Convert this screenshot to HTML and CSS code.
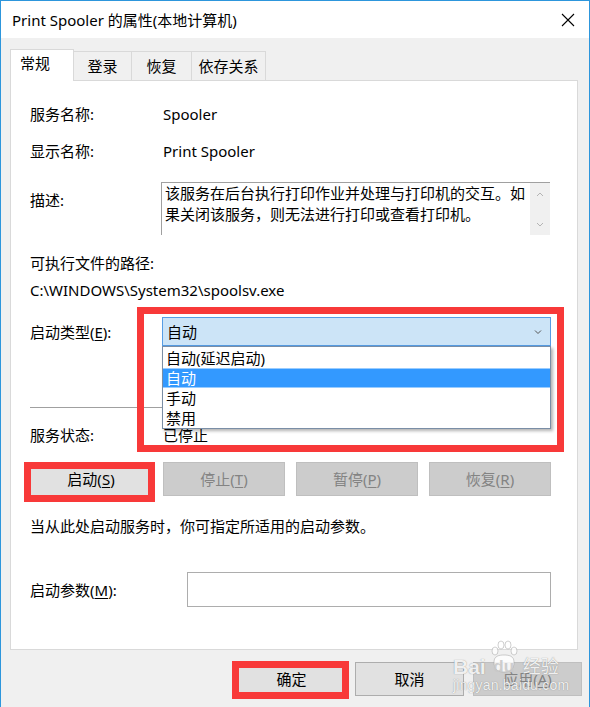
FILE: index.html
```html
<!DOCTYPE html>
<html lang="zh-CN">
<head>
  <meta charset="UTF-8">
  <title>Print Spooler 的属性</title>
  <link rel="stylesheet" href="styles.css">
</head>
<body>
  <div class="window">
    <div class="titlebar">
      <span class="title">Print Spooler 的属性(本地计算机)</span>
      <svg class="close" width="14" height="14" viewBox="0 0 14 14">
        <path d="M1 1L13 13M13 1L1 13" stroke="#000" stroke-width="1.1" fill="none"/>
      </svg>
    </div>

    <div class="client">
      <div class="tabs">
        <div class="tab active" style="width:64px">常规</div>
        <div class="tab" style="width:58px">登录</div>
        <div class="tab" style="width:60px">恢复</div>
        <div class="tab" style="width:74px">依存关系</div>
      </div>

      <div class="panel">
        <div class="row first">
          <div class="label">服务名称:</div>
          <div class="value">Spooler</div>
        </div>
        <div class="row gap17">
          <div class="label">显示名称:</div>
          <div class="value">Print Spooler</div>
        </div>
        <div class="row desc-row">
          <div class="label">描述:</div>
          <div class="desc-box">
            <div class="desc-text">该服务在后台执行打印作业并处理与打印机的交互。如<br>果关闭该服务，则无法进行打印或查看打印机。</div>
            <div class="scrollbar">
              <svg width="20" height="53" viewBox="0 0 20 53">
                <path d="M7 13L10 10L13 13" stroke="#b4b4b4" fill="none"/>
                <path d="M7 40L10 43L13 40" stroke="#b4b4b4" fill="none"/>
              </svg>
            </div>
          </div>
        </div>
        <div class="row path-label">
          <div>可执行文件的路径:</div>
        </div>
        <div class="row path-value">
          <div>C:\WINDOWS\System32\spoolsv.exe</div>
        </div>

        <div class="row startup-row">
          <div class="label wide">启动类型(<u>E</u>):</div>
          <div class="combo-wrap">
            <div class="combo">
              <span>自动</span>
              <svg class="chevron" width="8" height="6" viewBox="0 0 8 6">
                <path d="M1 1.5L4 4.5L7 1.5" stroke="#555" fill="none"/>
              </svg>
            </div>
            <div class="dropdown">
              <div class="item">自动(延迟启动)</div>
              <div class="item selected">自动</div>
              <div class="item">手动</div>
              <div class="item">禁用</div>
            </div>
            <div class="red-box combo-mark"></div>
          </div>
        </div>

        <div class="separator"></div>

        <div class="row gap17">
          <div class="label">服务状态:</div>
          <div class="value">已停止</div>
        </div>

        <div class="button-row">
          <div class="btn-wrap">
            <div class="btn">启动(<u>S</u>)</div>
            <div class="red-box start-mark"></div>
          </div>
          <div class="btn disabled">停止(<u>T</u>)</div>
          <div class="btn disabled">暂停(<u>P</u>)</div>
          <div class="btn disabled">恢复(<u>R</u>)</div>
        </div>

        <div class="row hint">当从此处启动服务时，你可指定所适用的启动参数。</div>

        <div class="row param-row">
          <div class="label param">启动参数(<u>M</u>):</div>
          <div class="param-input"></div>
        </div>
      </div>

      <div class="footer">
        <div class="btn-wrap">
          <div class="btn small">确定</div>
          <div class="red-box ok-mark"></div>
        </div>
        <div class="btn small">取消</div>
        <div class="btn small disabled">应用(<u>A</u>)</div>
      </div>

      <div class="watermark">
        <div class="wm-top">
          <span class="wm-bai">Bai</span>
          <span class="wm-du">
            <svg class="paw" width="28" height="34" viewBox="0 0 28 34">
              <g fill="rgba(255,255,255,0.8)" stroke="rgba(150,150,150,0.45)">
                <ellipse cx="5" cy="11" rx="3" ry="4"/>
                <ellipse cx="11" cy="5" rx="3" ry="4"/>
                <ellipse cx="18" cy="5" rx="3" ry="4"/>
                <ellipse cx="24" cy="11" rx="3" ry="4"/>
                <path d="M4 22C4 16 9 15 14 15C19 15 24 16 24 22C24 30 20 32 14 32C8 32 4 30 4 22Z"/>
              </g>
            </svg>
            <span class="du-text">du</span>
          </span>
          <span class="wm-jy">经验</span>
        </div>
        <div class="wm-url">jingyan.baidu.com</div>
      </div>
    </div>
  </div>
</body>
</html>
```

FILE: styles.css
```css
* {
  margin: 0;
  padding: 0;
  box-sizing: border-box;
}

body {
  font-family: "Noto Sans", "Noto Sans CJK SC", sans-serif;
  font-size: 15px;
  color: #000;
  background: #fff;
}

u {
  text-decoration: underline;
  text-underline-offset: 2px;
}

.window {
  position: relative;
  width: 590px;
  height: 707px;
  border: 1px solid #2d96dc;
  border-bottom: none;
  overflow: hidden;
}

.titlebar {
  height: 37px;
  background: #fff;
  display: flex;
  align-items: center;
  justify-content: space-between;
  padding: 0 14px 0 11px;
}

.title {
  line-height: 20px;
}

.close {
  margin-top: 1px;
}

.client {
  height: 669px;
  background: #f0f0f0;
  padding-left: 9px;
}

/* Tabs */
.tabs {
  display: flex;
  align-items: flex-end;
  height: 42px;
}

.tab {
  height: 29px;
  border: 1px solid #d9d9d9;
  border-bottom: none;
  border-left: none;
  background: #f0f0f0;
  text-align: center;
  line-height: 28px;
}

.tab.active {
  height: 32px;
  background: #fff;
  border-left: 1px solid #d9d9d9;
  margin-bottom: -1px;
  position: relative;
  z-index: 1;
  text-align: left;
  padding-left: 9px;
  line-height: 26px;
}

/* Panel */
.panel {
  width: 568px;
  height: 570px;
  background: #fff;
  border: 1px solid #d9d9d9;
  padding-left: 19px;
}

.row {
  display: flex;
  align-items: center;
  height: 20px;
  line-height: 20px;
}

.row.first { margin-top: 23px; }
.row.gap17 { margin-top: 17px; }

.label {
  width: 131px;
  flex: none;
}

.label.wide { width: 132px; }
.label.param { width: 157px; }

.value {
  padding-left: 2px;
}

.desc-row {
  margin-top: 21px;
  height: 53px;
  align-items: flex-start;
}

.desc-row .label {
  padding-top: 8px;
}

.desc-box {
  width: 389px;
  height: 53px;
  border-top: 1px solid #a0a0a0;
  border-left: 1px solid #a0a0a0;
  display: flex;
}

.desc-text {
  flex: 1;
  padding-left: 3px;
  line-height: 21px;
  white-space: nowrap;
}

.scrollbar {
  width: 20px;
  height: 52px;
  background: #f0f0f0;
}

.path-label { margin-top: 18px; }
.path-value { margin-top: 7px; }

.startup-row {
  margin-top: 17px;
  height: 29px;
}

.combo-wrap {
  position: relative;
  width: 389px;
  height: 29px;
}

.combo {
  height: 29px;
  background: #cce4f7;
  border: 1px solid #569de5;
  display: flex;
  align-items: center;
  justify-content: space-between;
  padding: 0 8px 0 4px;
}

.dropdown {
  position: absolute;
  top: 29px;
  left: 0;
  width: 389px;
  height: 83px;
  background: #fff;
  border: 1px solid #7a8ea6;
  box-shadow: 2px 2px 3px rgba(0, 0, 0, 0.3);
  padding-top: 1px;
  z-index: 3;
}

.item {
  height: 20px;
  line-height: 20px;
  padding-left: 3px;
}

.item.selected {
  background: #3399ff;
  border-top: 1px solid #99ccff;
  border-bottom: 1px solid #99ccff;
  line-height: 18px;
  color: #fff;
}

.red-box {
  position: absolute;
  border: 7px solid #f83939;
  z-index: 4;
}

.combo-mark {
  left: -25px;
  top: -10px;
  width: 427px;
  height: 145px;
}

.separator {
  margin-top: 61px;
  width: 521px;
  height: 1px;
  background: #a0a0a0;
}

/* Buttons */
.button-row {
  margin-top: 17px;
  display: flex;
  gap: 11px;
}

.btn-wrap {
  position: relative;
}

.btn {
  width: 122px;
  height: 34px;
  line-height: 32px;
  text-align: center;
  background: #e1e1e1;
  border: 1px solid #adadad;
}

.btn.disabled {
  background: #cccccc;
  border-color: #bfbfbf;
  color: #838383;
}

.btn.small {
  width: 109px;
}

.start-mark {
  left: -6px;
  top: 0;
  width: 131px;
  height: 40px;
}

.hint {
  margin-top: 20px;
}

.param-row {
  margin-top: 36px;
  height: 35px;
}

.param-input {
  width: 364px;
  height: 35px;
  border: 1px solid #adadad;
  background: #fff;
}

/* Footer */
.footer {
  display: flex;
  justify-content: flex-end;
  gap: 9px;
  padding-right: 7px;
  margin-top: 12px;
}

.ok-mark {
  left: -5px;
  top: -1px;
  width: 117px;
  height: 38px;
}

/* Watermark */
.watermark {
  position: absolute;
  left: 452px;
  top: 640px;
  color: rgba(255, 255, 255, 0.88);
  text-shadow: 0 0 1px rgba(90, 90, 90, 0.7);
  z-index: 5;
}

.wm-top {
  display: flex;
  align-items: flex-end;
  height: 36px;
}

.wm-bai {
  font-family: "Liberation Sans", sans-serif;
  font-size: 21px;
  font-weight: bold;
  line-height: 21px;
}

.wm-du {
  position: relative;
  width: 26px;
  height: 21px;
  margin-left: 5px;
}

.paw {
  position: absolute;
  left: -1px;
  top: -16px;
}

.du-text {
  position: relative;
  display: block;
  text-align: center;
  font-family: "Liberation Sans", sans-serif;
  font-size: 17px;
  font-weight: bold;
  line-height: 21px;
  color: rgba(200, 200, 200, 0.9);
  text-shadow: none;
}

.wm-jy {
  font-size: 18px;
  line-height: 21px;
  margin-left: 6px;
}

.wm-url {
  font-family: "Liberation Sans", sans-serif;
  font-size: 14px;
  line-height: 15px;
  margin-top: 1px;
  letter-spacing: 0.2px;
}
```
